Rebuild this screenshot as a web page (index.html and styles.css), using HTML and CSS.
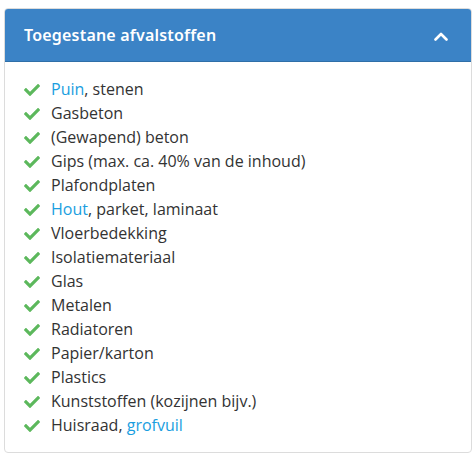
FILE: index.html
```html
<!DOCTYPE html>
<html lang="nl">
<head>
<meta charset="utf-8">
<link rel="stylesheet" href="styles.css">
</head>
<body>
<div class="panel">
  <div class="panel-heading">
    <span class="panel-title">Toegestane afvalstoffen</span>
    <svg class="chevron" width="14" height="9" viewBox="0 0 14 9"><path d="M1.5 7.5 L7 2 L12.5 7.5" fill="none" stroke="#fff" stroke-width="2.6" stroke-linecap="round" stroke-linejoin="round"/></svg>
  </div>
  <ul class="list">
    <li><svg class="check" viewBox="0 0 512 512"><path d="M173.9 439.4l-166.4-166.4c-10-10-10-26.2 0-36.2l36.2-36.2c10-10 26.2-10 36.2 0L192 312.7 432.1 72.6c10-10 26.2-10 36.2 0l36.2 36.2c10 10 10 26.2 0 36.2l-294.4 294.4c-10 10-26.2 10-36.2 0z"/></svg><span><a href="#">Puin</a>, stenen</span></li>
    <li><svg class="check" viewBox="0 0 512 512"><path d="M173.9 439.4l-166.4-166.4c-10-10-10-26.2 0-36.2l36.2-36.2c10-10 26.2-10 36.2 0L192 312.7 432.1 72.6c10-10 26.2-10 36.2 0l36.2 36.2c10 10 10 26.2 0 36.2l-294.4 294.4c-10 10-26.2 10-36.2 0z"/></svg><span>Gasbeton</span></li>
    <li><svg class="check" viewBox="0 0 512 512"><path d="M173.9 439.4l-166.4-166.4c-10-10-10-26.2 0-36.2l36.2-36.2c10-10 26.2-10 36.2 0L192 312.7 432.1 72.6c10-10 26.2-10 36.2 0l36.2 36.2c10 10 10 26.2 0 36.2l-294.4 294.4c-10 10-26.2 10-36.2 0z"/></svg><span>(Gewapend) beton</span></li>
    <li><svg class="check" viewBox="0 0 512 512"><path d="M173.9 439.4l-166.4-166.4c-10-10-10-26.2 0-36.2l36.2-36.2c10-10 26.2-10 36.2 0L192 312.7 432.1 72.6c10-10 26.2-10 36.2 0l36.2 36.2c10 10 10 26.2 0 36.2l-294.4 294.4c-10 10-26.2 10-36.2 0z"/></svg><span>Gips (max. ca. 40% van de inhoud)</span></li>
    <li><svg class="check" viewBox="0 0 512 512"><path d="M173.9 439.4l-166.4-166.4c-10-10-10-26.2 0-36.2l36.2-36.2c10-10 26.2-10 36.2 0L192 312.7 432.1 72.6c10-10 26.2-10 36.2 0l36.2 36.2c10 10 10 26.2 0 36.2l-294.4 294.4c-10 10-26.2 10-36.2 0z"/></svg><span>Plafondplaten</span></li>
    <li><svg class="check" viewBox="0 0 512 512"><path d="M173.9 439.4l-166.4-166.4c-10-10-10-26.2 0-36.2l36.2-36.2c10-10 26.2-10 36.2 0L192 312.7 432.1 72.6c10-10 26.2-10 36.2 0l36.2 36.2c10 10 10 26.2 0 36.2l-294.4 294.4c-10 10-26.2 10-36.2 0z"/></svg><span><a href="#">Hout</a>, parket, laminaat</span></li>
    <li><svg class="check" viewBox="0 0 512 512"><path d="M173.9 439.4l-166.4-166.4c-10-10-10-26.2 0-36.2l36.2-36.2c10-10 26.2-10 36.2 0L192 312.7 432.1 72.6c10-10 26.2-10 36.2 0l36.2 36.2c10 10 10 26.2 0 36.2l-294.4 294.4c-10 10-26.2 10-36.2 0z"/></svg><span>Vloerbedekking</span></li>
    <li><svg class="check" viewBox="0 0 512 512"><path d="M173.9 439.4l-166.4-166.4c-10-10-10-26.2 0-36.2l36.2-36.2c10-10 26.2-10 36.2 0L192 312.7 432.1 72.6c10-10 26.2-10 36.2 0l36.2 36.2c10 10 10 26.2 0 36.2l-294.4 294.4c-10 10-26.2 10-36.2 0z"/></svg><span>Isolatiemateriaal</span></li>
    <li><svg class="check" viewBox="0 0 512 512"><path d="M173.9 439.4l-166.4-166.4c-10-10-10-26.2 0-36.2l36.2-36.2c10-10 26.2-10 36.2 0L192 312.7 432.1 72.6c10-10 26.2-10 36.2 0l36.2 36.2c10 10 10 26.2 0 36.2l-294.4 294.4c-10 10-26.2 10-36.2 0z"/></svg><span>Glas</span></li>
    <li><svg class="check" viewBox="0 0 512 512"><path d="M173.9 439.4l-166.4-166.4c-10-10-10-26.2 0-36.2l36.2-36.2c10-10 26.2-10 36.2 0L192 312.7 432.1 72.6c10-10 26.2-10 36.2 0l36.2 36.2c10 10 10 26.2 0 36.2l-294.4 294.4c-10 10-26.2 10-36.2 0z"/></svg><span>Metalen</span></li>
    <li><svg class="check" viewBox="0 0 512 512"><path d="M173.9 439.4l-166.4-166.4c-10-10-10-26.2 0-36.2l36.2-36.2c10-10 26.2-10 36.2 0L192 312.7 432.1 72.6c10-10 26.2-10 36.2 0l36.2 36.2c10 10 10 26.2 0 36.2l-294.4 294.4c-10 10-26.2 10-36.2 0z"/></svg><span>Radiatoren</span></li>
    <li><svg class="check" viewBox="0 0 512 512"><path d="M173.9 439.4l-166.4-166.4c-10-10-10-26.2 0-36.2l36.2-36.2c10-10 26.2-10 36.2 0L192 312.7 432.1 72.6c10-10 26.2-10 36.2 0l36.2 36.2c10 10 10 26.2 0 36.2l-294.4 294.4c-10 10-26.2 10-36.2 0z"/></svg><span>Papier/karton</span></li>
    <li><svg class="check" viewBox="0 0 512 512"><path d="M173.9 439.4l-166.4-166.4c-10-10-10-26.2 0-36.2l36.2-36.2c10-10 26.2-10 36.2 0L192 312.7 432.1 72.6c10-10 26.2-10 36.2 0l36.2 36.2c10 10 10 26.2 0 36.2l-294.4 294.4c-10 10-26.2 10-36.2 0z"/></svg><span>Plastics</span></li>
    <li><svg class="check" viewBox="0 0 512 512"><path d="M173.9 439.4l-166.4-166.4c-10-10-10-26.2 0-36.2l36.2-36.2c10-10 26.2-10 36.2 0L192 312.7 432.1 72.6c10-10 26.2-10 36.2 0l36.2 36.2c10 10 10 26.2 0 36.2l-294.4 294.4c-10 10-26.2 10-36.2 0z"/></svg><span>Kunststoffen (kozijnen bijv.)</span></li>
    <li><svg class="check" viewBox="0 0 512 512"><path d="M173.9 439.4l-166.4-166.4c-10-10-10-26.2 0-36.2l36.2-36.2c10-10 26.2-10 36.2 0L192 312.7 432.1 72.6c10-10 26.2-10 36.2 0l36.2 36.2c10 10 10 26.2 0 36.2l-294.4 294.4c-10 10-26.2 10-36.2 0z"/></svg><span>Huisraad, <a href="#">grofvuil</a></span></li>
  </ul>
</div>
</body>
</html>
```

FILE: styles.css
```css
* { box-sizing: border-box; }
html, body { background: #fff; }
body {
  margin: 0;
  padding: 8px 4px 0 4px;
  font-family: "Open Sans", "Liberation Sans", sans-serif;
  color: #333;
}
.panel {
  width: 468px;
  height: 445px;
  border: 1px solid #dcdcdc;
  border-radius: 4px;
  overflow: hidden;
}
.panel-heading {
  height: 53px;
  background: #3b83c6;
  border-bottom: 1px solid #2f6fa8;
  display: flex;
  align-items: center;
  justify-content: space-between;
  padding: 0 23px 0 19px;
}
.panel-title {
  color: #fff;
  font-family: "Noto Sans", "Open Sans", sans-serif;
  font-weight: 600;
  font-size: 16px;
  letter-spacing: 0.2px;
}
.chevron { display: block; margin-top: 2px; }
.list {
  list-style: none;
  margin: 0;
  padding: 15px 0 0 19px;
}
.list li {
  display: flex;
  align-items: center;
  height: 24px;
  font-size: 16px;
}
.check {
  width: 16px;
  height: 16px;
  fill: #5cb85c;
  margin-right: 11px;
  flex: none;
  margin-top: 1px;
}
a { color: #1a9ee0; text-decoration: none; }
```
